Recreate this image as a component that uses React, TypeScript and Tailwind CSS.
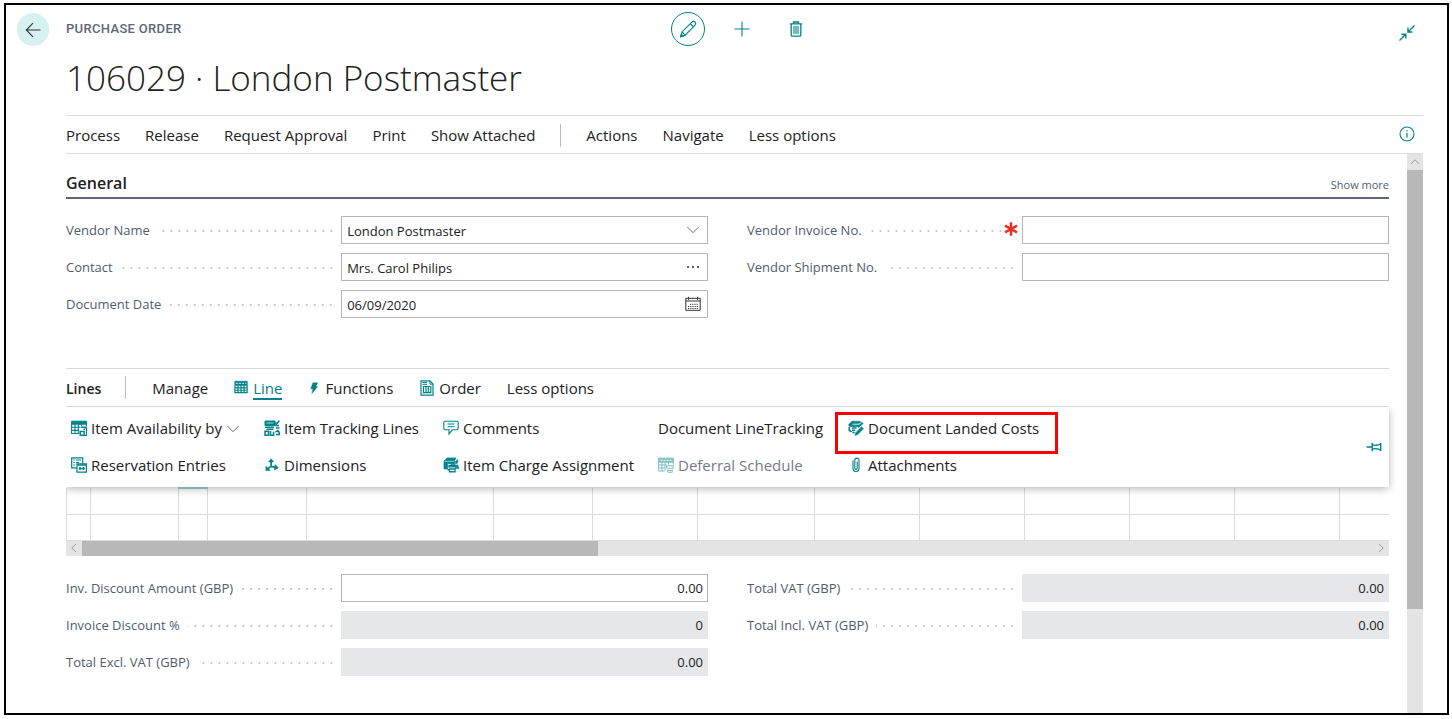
import { ReactNode } from "react";
import { clsx } from "clsx";

type IconProps = { children: ReactNode; size?: string; stroke?: string };

function Icon({ children, size = "size-4", stroke = "stroke-[#00838a]" }: IconProps) {
  return (
    <svg viewBox="0 0 16 16" aria-hidden="true" className={clsx("shrink-0 fill-none", size, stroke)}>
      {children}
    </svg>
  );
}

const TEAL = "#00838a";

const BackIcon = () => (
  <Icon stroke="stroke-[#333]">
    <path d="M15.5 8H1.5M8 1.2 1.3 8 8 14.8" strokeWidth="1.1" />
  </Icon>
);

const PencilIcon = () => (
  <Icon size="size-[18px]">
    <path d="M1.5 14.8 2.6 10.6 11.4 1.8a1.9 1.9 0 0 1 2.8 0 1.9 1.9 0 0 1 0 2.8L5.5 13.5 1.5 14.8ZM10 3.2l2.8 2.8M2.6 10.6 5.5 13.5" />
    <path d="m1.5 14.8 2-.6-1.4-1.4Z" fill={TEAL} />
  </Icon>
);

const PlusIcon = () => (
  <Icon>
    <path d="M8 .5v15M.5 8h15" strokeWidth="1.1" />
  </Icon>
);

const TrashIcon = () => (
  <Icon>
    <path d="M1.8 2.8h12.4M5.5 2.6V1h5v1.6M3.2 3v11.2q0 1 1 1h7.6q1 0 1-1V3" strokeWidth="1.3" />
    <path d="M6 5v8M8 5v8M10 5v8" strokeWidth="1.1" />
  </Icon>
);

const CollapseIcon = () => (
  <Icon>
    <path d="M15.5.5 9.5 6.5M9 2.5V7h4.5M.5 15.5l6-6M2.5 9.2H6.8v4.3" strokeWidth="1.4" />
  </Icon>
);

const InfoIcon = () => (
  <Icon>
    <circle cx="8" cy="8" r="7" strokeWidth="1.1" />
    <path d="M8 6.8v4.7M8 4.3v1.3" strokeWidth="1.2" />
  </Icon>
);

const ChevronDown = () => (
  <Icon size="size-3.5" stroke="stroke-[#555]">
    <path d="M1.5 4.5 8 11l6.5-6.5" />
  </Icon>
);

const CalendarIcon = () => (
  <Icon stroke="stroke-[#333]">
    <path d="M.8 2.3h14.4v12H.8ZM.8 5h14.4M3.5.8v3M12.5.8v3" />
    <path d="M3 10.5h10M3 12.5h10M5 8.3h8" strokeDasharray="1.2 1" />
  </Icon>
);

const TableIcon = () => (
  <Icon size="size-3.5">
    <path d="M1 1.5h14v4.5H1Z" fill={TEAL} />
    <path d="M1 6v8.5h14V6M1 9h14M1 11.7h14M4.5 6v8.5M8 6v8.5M11.5 6v8.5" strokeWidth="1.4" />
    <path d="M2 3.8h12" stroke="#fff" strokeWidth=".9" strokeDasharray="2.5 1" />
  </Icon>
);

const BoltIcon = () => (
  <Icon size="size-3">
    <path d="M6.5 1h6.5L10.5 6H13L5 15.5 6.5 9H3.5Z" fill={TEAL} strokeWidth=".5" />
  </Icon>
);

const OrderIcon = () => (
  <Icon>
    <path d="M2 .8h9L14 4v11.2H2Z" strokeWidth="1.2" />
    <path d="M11 1v3.2h3M3.5 2.5H8M3.5 4.3H8" />
    <path d="M4.5 6.5h7.3v6.2H4.5ZM7 6.5v6.2M9.3 6.5v6.2" strokeWidth="1.2" />
  </Icon>
);

const AvailabilityIcon = () => (
  <Icon>
    <path d="M.6 1.2h14.8v3H.6Z" fill={TEAL} />
    <path d="M.6 4.2v9.3H8.5M.6 7.3h9M.6 10.4h7.5M4 4v9.3M7.3 4v9.3M10.5 4v2M15.4 4v2" strokeWidth="1.1" />
    <path d="M10 7.2h5.6v8.3h-3.2M9.2 11.5h4v3.8h-4ZM12.5 9.3h2" strokeWidth="1.4" />
  </Icon>
);

const TrackingIcon = () => (
  <Icon>
    <path d="M1 1h10v4.5H1Z" fill={TEAL} />
    <path d="M2.5 3h7" stroke="#fff" strokeWidth=".7" />
    <path d="M15.4.7 11.5 5M12 2.5V5.5h3M1 7.3h9M12 8h3.5M2.5 9.3h7M14.5 10l-2 1.5h3M1 11.3h3.5v3.9H1ZM6.5 11v4.2h3v-3.5M12 14.5h3.2V12" strokeWidth="1.5" />
  </Icon>
);

const CommentIcon = () => (
  <Icon>
    <path d="M2.3 1.2h11.4q1.5 0 1.5 1.5v5.6q0 1.5-1.5 1.5H9.3L6 14V9.8H2.3Q.8 9.8.8 8.3V2.7Q.8 1.2 2.3 1.2Z" strokeWidth="1.1" />
    <path d="M4.5 4h7M4.5 6.8h7" strokeWidth="1.1" />
  </Icon>
);

const ReservationIcon = () => (
  <Icon>
    <path d="M.7.9h11v10H.7ZM2.3 3h1.5M5 3h5M2.3 5.5h1.5M5 5.5h3M2.3 8h1.5" strokeWidth="1.2" />
    <path d="M6 6.8h9.4v8.4H6Z" fill="#fff" strokeWidth="1.2" />
    <path d="M6 8h9.4M7.8 11.5h6M9 10v3M12.5 10v3" strokeWidth="1.4" />
  </Icon>
);

const DimensionsIcon = () => (
  <Icon size="size-3.5">
    <path d="M7 9V2.5M7 9.5l6 1.5M7 9.5l-4.5 3" strokeWidth="2" />
    <path d="m4 4.5 3-3.7 3 3.7ZM11.5 7.5l3.8 3.8-4.5 2.4ZM1 9.3l5 5H1Z" fill={TEAL} strokeWidth=".6" />
  </Icon>
);

const ChargeIcon = () => (
  <Icon>
    <path d="M1 4 4.2 1h8.8L11.5 3.5v4H8V6.5H4.5V12H1Z" fill={TEAL} strokeWidth=".7" />
    <path d="M1.5 4.3h9.5" stroke="#fff" strokeWidth=".6" />
    <path d="M12.5 4.5 14.8 2.3v3.4l-2.3 1.6Z" fill={TEAL} strokeWidth=".5" />
    <path d="M6 8.5h8.5l.8 2.5H13V9.7H6ZM6.5 12h5.5v2.8H6.5ZM4.5 12.8h2" fill="#fff" strokeWidth="1.4" />
  </Icon>
);

const LandedIcon = () => (
  <Icon>
    <path d="M.8 4.5 4 1.2l7.8.2 3.4 2-3.6 3H1.2Z" fill={TEAL} strokeWidth=".7" />
    <path d="M4.5 4.2h6.5l2-1.3" stroke="#fff" strokeWidth=".9" />
    <path d="M1.2 7v3.5l2.5 1.3M4 8h4.5M4 10.3h3.3M4.5 12.5h2.3M10 7.2l1.5-1" strokeWidth="1.5" />
    <path d="m7.5 13 6-6.3 2 2-6 6-2.6.7Z" fill={TEAL} strokeWidth=".5" />
  </Icon>
);

const DeferralIcon = () => (
  <Icon>
    <g opacity=".5">
      <path d="M.6 1.2h14.8v4H.6Z" fill={TEAL} />
      <path d="M2.5 3.3h11" stroke="#fff" strokeWidth="1" strokeDasharray="2 1" />
      <path d="M.6 5v9h6M.6 8h8M.6 11h6M3.8 5.5v8.3M7 5.5v8M10.5 5.5v2M15.4 5v2.5" />
      <path d="M8.5 8.7h6.7v2.5H8.5ZM9.8 12.5v2.8h4.5v-2.8M9.8 13.5h4.5" />
    </g>
  </Icon>
);

const ClipIcon = () => (
  <Icon>
    <path d="M5 3.5v8a3 3 0 0 0 6 0V3.2a2.1 2.1 0 0 0-4.2 0v8a1.2 1.2 0 0 0 2.4 0V4.5" strokeWidth="1.1" />
  </Icon>
);

const PinIcon = () => (
  <Icon>
    <path d="M.5 8H6M6.2 3.8v8.4M6.2 5.5q1.5 1 4 .8 2.5 0 4.5-1.5M6.2 10.5q1.5-1 4-.8 2.5 0 4.5 1.5M14.7 4v8" strokeWidth="1.4" />
  </Icon>
);

type FieldProps = {
  id: string;
  label: string;
  value?: string;
  numeric?: boolean;
  readOnly?: boolean;
  required?: boolean;
  action?: { label: string; icon: ReactNode };
};

function Field({ id, label, value = "", numeric, readOnly, required, action }: FieldProps) {
  return (
    <div className="grid grid-cols-[3fr_4fr] items-center">
      <div className="flex items-center gap-2 pr-1.5 pt-0.5">
        <label htmlFor={id} className="whitespace-nowrap text-[13px] text-[#505c6d]">
          {label}
        </label>
        <span
          aria-hidden="true"
          className="h-2 flex-1 bg-[radial-gradient(circle,#c8ccd2_1px,transparent_1px)] bg-[length:8px_8px] bg-right"
        />
        {required && (
          <svg viewBox="0 0 14 14" aria-hidden="true" className="-ml-2 mb-1 -mr-0.5 size-3.5 shrink-0 stroke-[#eb2d24]">
            <path d="M7 .3v13.4M1 3.6l12 6.8M1 10.4l12-6.8" strokeWidth="2.4" />
          </svg>
        )}
      </div>
      <div
        className={clsx(
          "flex h-7 items-center border",
          readOnly ? "border-[#e5e7e9] bg-[#e5e7e9]" : "border-[#b3b5b8] bg-white",
        )}
      >
        <input
          id={id}
          defaultValue={value}
          readOnly={readOnly}
          required={required}
          className={clsx(
            "h-full min-w-0 flex-1 bg-transparent pt-px text-[13px] text-[#212121] outline-none",
            numeric ? "px-1 text-right" : "px-[5px]",
          )}
        />
        {action && (
          <button type="button" aria-label={action.label} className="flex w-7 items-center justify-center">
            {action.icon}
          </button>
        )}
      </div>
    </div>
  );
}

type Action = { label: string; icon?: ReactNode; menu?: boolean; disabled?: boolean; marked?: boolean };

const columns: { actions: Action[] }[] = [
  {
    actions: [
      { label: "Item Availability by", icon: <AvailabilityIcon />, menu: true },
      { label: "Reservation Entries", icon: <ReservationIcon /> },
    ],
  },
  {
    actions: [
      { label: "Item Tracking Lines", icon: <TrackingIcon /> },
      { label: "Dimensions", icon: <DimensionsIcon /> },
    ],
  },
  {
    actions: [
      { label: "Comments", icon: <CommentIcon /> },
      { label: "Item Charge Assignment", icon: <ChargeIcon /> },
    ],
  },
  {
    actions: [
      { label: "Document LineTracking" },
      { label: "Deferral Schedule", icon: <DeferralIcon />, disabled: true },
    ],
  },
  {
    actions: [
      { label: "Document Landed Costs", icon: <LandedIcon />, marked: true },
      { label: "Attachments", icon: <ClipIcon /> },
    ],
  },
];

function ActionButton({ action }: { action: Action }) {
  return (
    <button
      type="button"
      disabled={action.disabled}
      className={clsx(
        "relative flex h-[37px] items-center gap-1 whitespace-nowrap text-[15px]",
        action.disabled ? "text-[#717c8b]" : "text-[#212121]",
      )}
    >
      {action.icon && <span className="flex w-4 justify-center pb-0.5">{action.icon}</span>}
      {action.label}
      {action.menu && <ChevronDown />}
      {action.marked && (
        <span className="pointer-events-none absolute -bottom-[7px] -left-[13px] -right-[19px] top-[2px] border-3 border-[#fe0000]" />
      )}
    </button>
  );
}

const cellWidths = ["w-6", "w-[88px]", "w-[29px]", "w-[99px]", "w-[187px]", "w-[99px]", "w-[105px]", "w-[117px]", "w-[105px]", "w-[105px]", "w-[105px]", "w-[105px]", "w-[105px]", ""];

function Divider({ className }: { className?: string }) {
  return <span aria-hidden="true" className={clsx("h-[23px] w-px bg-[#b9bec6]", className)} />;
}

export default function App() {
  return (
    <div className="flex min-h-screen bg-white pb-1 pl-1 pr-[3px] pt-[3px] font-['Open_Sans','Noto_Sans',sans-serif] text-[#212121]">
      <div className="flex flex-1 border-2 border-black pr-6">
        <div className="w-[60px] shrink-0 pl-[11px] pt-2">
          <button type="button" aria-label="Back" className="flex h-[33px] w-8 items-center justify-center rounded-full bg-[#d7f0f1]">
            <BackIcon />
          </button>
        </div>

        <div className="flex min-w-0 flex-1 flex-col">
          <header>
            <div className="grid h-12 grid-cols-[1fr_auto_1fr] items-center">
              <span className="font-['Roboto',sans-serif] text-[13px] font-medium tracking-wide text-[#5c6779]">PURCHASE ORDER</span>
              <div className="flex items-center gap-[29px] pr-3.5">
                <button type="button" aria-label="Edit" className="flex size-[34px] items-center justify-center rounded-full border border-[#00838a]">
                  <PencilIcon />
                </button>
                <button type="button" aria-label="New"><PlusIcon /></button>
                <button type="button" aria-label="Delete" className="ml-[9px]"><TrashIcon /></button>
              </div>
              <button type="button" aria-label="Collapse" className="mr-2 mt-2 justify-self-end"><CollapseIcon /></button>
            </div>
            <h1 className="h-[62px] text-[35px] font-light leading-[50px]">106029 · London Postmaster</h1>
          </header>

          <nav className="flex h-[39px] items-center gap-[25px] whitespace-nowrap border-y border-[#dcdee0] pt-0.5 text-[15px]">
            <button type="button">Process</button>
            <button type="button">Release</button>
            <button type="button">Request Approval</button>
            <button type="button">Print</button>
            <button type="button">Show Attached</button>
            <Divider />
            <button type="button">Actions</button>
            <button type="button">Navigate</button>
            <button type="button">Less options</button>
            <button type="button" aria-label="Information" className="mb-1 ml-auto mr-2"><InfoIcon /></button>
          </nav>

          <div className="flex flex-1">
            <main className="min-w-0 flex-1">
              <section>
                <div className="flex h-[45px] items-end justify-between border-b-2 border-[#5c6779]">
                  <h2 className="pb-0.5 text-[16px] font-semibold">General</h2>
                  <button type="button" className="pb-1 text-[11px] text-[#505c6d]">Show more</button>
                </div>
                <div className="grid grid-cols-2 gap-x-[39px] pt-[17px]">
                  <div className="flex flex-col gap-[9px]">
                    <Field id="vendor" label="Vendor Name" value="London Postmaster" action={{ label: "Choose vendor", icon: <ChevronDown /> }} />
                    <Field
                      id="contact"
                      label="Contact"
                      value="Mrs. Carol Philips"
                      action={{
                        label: "Look up contact",
                        icon: (
                          <svg viewBox="0 0 14 14" aria-hidden="true" className="size-3.5 fill-[#333]">
                            <circle cx="2" cy="7" r="1" /><circle cx="7" cy="7" r="1" /><circle cx="12" cy="7" r="1" />
                          </svg>
                        ),
                      }}
                    />
                    <Field id="date" label="Document Date" value="06/09/2020" action={{ label: "Open calendar", icon: <CalendarIcon /> }} />
                  </div>
                  <div className="flex flex-col gap-[9px]">
                    <Field id="invoice" label="Vendor Invoice No." required />
                    <Field id="shipment" label="Vendor Shipment No." />
                  </div>
                </div>
              </section>

              <section className="mt-[50px]">
                <div className="flex h-[39px] items-center whitespace-nowrap border-y border-[#d4d6d9] text-[15px]">
                  <h2 className="pt-0.5 text-[14px] font-semibold">Lines</h2>
                  <Divider className="ml-6" />
                  <div className="flex items-center gap-[26px] pl-[26px] pt-px">
                    <button type="button">Manage</button>
                    <button type="button" className="flex items-center gap-[5px] text-[#00838a]">
                      <span className="pb-0.5"><TableIcon /></span>
                      <span className="mt-0.5 border-b-2 border-[#00838a] leading-5">Line</span>
                    </button>
                    <button type="button" className="flex items-center gap-[5px]"><BoltIcon />Functions</button>
                    <button type="button" className="flex items-center gap-1"><OrderIcon />Order</button>
                    <button type="button">Less options</button>
                  </div>
                </div>

                <div className="relative flex items-center justify-between bg-white py-[3px] pl-[5px] pr-[7px] shadow-[0_2px_8px_rgba(0,0,0,0.28)] [clip-path:inset(0_-8px_-12px_0)]">
                  <div className="grid grid-cols-[193px_179px_215px_190px_auto]">
                    {columns.map((column) => (
                      <div key={column.actions[0].label} className="flex flex-col items-start">
                        {column.actions.map((action) => (
                          <ActionButton key={action.label} action={action} />
                        ))}
                      </div>
                    ))}
                  </div>
                  <button type="button" aria-label="Pin"><PinIcon /></button>
                </div>

                <table className="w-full table-fixed border-collapse">
                  <tbody>
                    {[0, 1].map((row) => (
                      <tr key={row} className="h-[26px]">
                        {cellWidths.map((width, i) => (
                          <td
                            key={i}
                            className={clsx(
                              "border-b border-l border-[#d9dbde] p-0",
                              row === 0 && i === 2 && "border-t-2 border-t-[#9fd3d6]",
                              width,
                            )}
                          />
                        ))}
                      </tr>
                    ))}
                  </tbody>
                </table>

                <div className="flex h-[15px] bg-[#e4e4e4]">
                  <button type="button" aria-label="Scroll left" className="flex w-4 items-center justify-center">
                    <Icon size="size-2.5" stroke="stroke-[#888]"><path d="M11 1.5 4.5 8l6.5 6.5" strokeWidth="1.3" /></Icon>
                  </button>
                  <div className="flex-1"><div className="h-full w-[40%] bg-[#b8b8b8]" /></div>
                  <button type="button" aria-label="Scroll right" className="flex w-4 items-center justify-center">
                    <Icon size="size-2.5" stroke="stroke-[#888]"><path d="M5 1.5 11.5 8 5 14.5" strokeWidth="1.3" /></Icon>
                  </button>
                </div>

                <div className="grid grid-cols-2 gap-x-[39px] pt-[18px]">
                  <div className="flex flex-col gap-[9px]">
                    <Field id="inv-discount" label="Inv. Discount Amount (GBP)" value="0.00" numeric />
                    <Field id="discount-pct" label="Invoice Discount %" value="0" numeric readOnly />
                    <Field id="total-excl" label="Total Excl. VAT (GBP)" value="0.00" numeric readOnly />
                  </div>
                  <div className="flex flex-col gap-[9px]">
                    <Field id="total-vat" label="Total VAT (GBP)" value="0.00" numeric readOnly />
                    <Field id="total-incl" label="Total Incl. VAT (GBP)" value="0.00" numeric readOnly />
                  </div>
                </div>
              </section>
            </main>

            <div className="ml-[18px] flex w-4 flex-col bg-[#e4e4e4]">
              <button type="button" aria-label="Scroll up" className="flex h-4 items-center justify-center">
                <Icon size="size-2.5" stroke="stroke-[#888]"><path d="M1.5 11 8 4.5l6.5 6.5" strokeWidth="1.3" /></Icon>
              </button>
              <div className="flex flex-1 flex-col">
                <div className="flex-[21] bg-[#b8b8b8]" />
                <div className="flex-[5]" />
              </div>
            </div>
          </div>
        </div>
      </div>
    </div>
  );
}
